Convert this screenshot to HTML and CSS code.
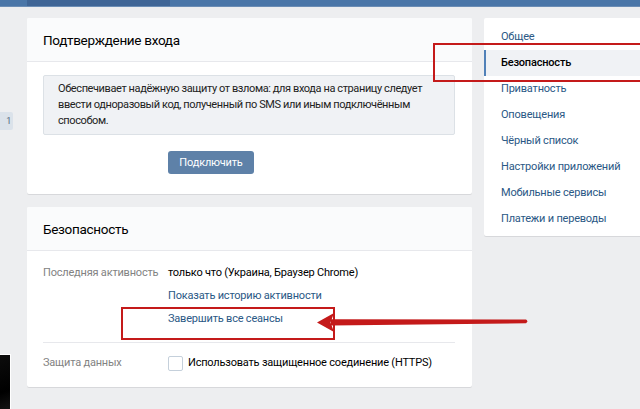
FILE: index.html
```html
<!DOCTYPE html>
<html lang="ru">

<head>
    <meta charset="UTF-8">
    <meta name="viewport" content="width=device-width, initial-scale=1.0">
    <title>Настройки — Безопасность</title>
    <link rel="stylesheet" href="styles.css">
</head>

<body>
    <header class="topbar">
        <div class="topbar-search"></div>
    </header>

    <div class="page">
        <!-- left strip (cut off) -->
        <aside class="side-strip">
            <span class="counter">1</span>
            <div class="thumb"></div>
        </aside>

        <main class="content">
            <!-- Login confirmation -->
            <section class="card">
                <h2 class="card-title">Подтверждение входа</h2>
                <div class="card-body">
                    <div class="info">
                        Обеспечивает надёжную защиту от взлома: для входа на страницу следует<br>
                        ввести одноразовый код, полученный по SMS или иным подключённым<br>
                        способом.
                    </div>
                    <button type="button" class="btn">Подключить</button>
                </div>
            </section>

            <!-- Security -->
            <section class="card">
                <h2 class="card-title">Безопасность</h2>
                <div class="card-body settings">
                    <div class="row row-activity">
                        <div class="row-label">Последняя активность</div>
                        <div class="row-value">
                            <div>только что (Украина, Браузер Chrome)</div>
                            <a href="#" class="link">Показать историю активности</a>
                            <a href="#" class="link">Завершить все сеансы</a>
                        </div>
                    </div>
                    <div class="row row-https">
                        <div class="row-label">Защита данных</div>
                        <label class="row-value check">
                            <span class="checkbox"></span>
                            Использовать защищенное соединение (HTTPS)
                        </label>
                    </div>
                </div>
            </section>
        </main>

        <nav class="menu">
            <a href="#" class="menu-item">Общее</a>
            <a href="#" class="menu-item active">Безопасность</a>
            <a href="#" class="menu-item">Приватность</a>
            <a href="#" class="menu-item">Оповещения</a>
            <a href="#" class="menu-item">Чёрный список</a>
            <a href="#" class="menu-item">Настройки приложений</a>
            <a href="#" class="menu-item">Мобильные сервисы</a>
            <a href="#" class="menu-item">Платежи и переводы</a>
        </nav>
    </div>

    <!-- red annotations -->
    <div class="mark mark-menu"></div>
    <div class="mark mark-sessions"></div>
    <svg class="arrow" width="640" height="409" viewBox="0 0 640 409">
        <path d="M331 319.2 L526 319.6 Q528.5 321.2 526 323.2 L331 325.6 Z" fill="#c41a1a" />
        <path d="M317 322.5 L334 313 L330.5 322.5 L334 332 Z" fill="#c41a1a" />
    </svg>
</body>

</html>
```

FILE: styles.css
```css
body {
    font-family: Roboto, 'Open Sans', sans-serif;
    font-size: 11px;
    letter-spacing: -0.2px;
    color: #000;
    margin: 0;
    padding: 0;
    background-color: #edeef0;
    overflow: hidden;
    width: 640px;
    height: 409px;
    position: relative;
}

.topbar {
    height: 6px;
    background-color: #4a76a8;
    border-bottom: 1px solid #6b8db5;
}

.topbar-search {
    margin-left: 27px;
    width: 143px;
    height: 6px;
    background-color: #3f6596;
}

.page {
    display: flex;
    align-items: flex-start;
    padding-top: 11px;
}

.side-strip {
    width: 27px;
    flex-shrink: 0;
    display: flex;
    flex-direction: column;
    align-items: flex-start;
    padding-top: 94px;
}

.counter {
    display: block;
    width: 13px;
    height: 18px;
    line-height: 18px;
    text-align: right;
    padding-right: 2px;
    box-sizing: border-box;
    font-size: 9px;
    color: #55677d;
    background-color: #dbe2ea;
    border-radius: 0 2px 2px 0;
}

.thumb {
    margin-top: 224px;
    width: 10px;
    height: 60px;
    background: linear-gradient(160deg, #0c0c0c, #000 60%, #1a1a1a);
    border-top: 1px solid #fff;
    border-right: 1px solid #fff;
}

.content {
    width: 445px;
    flex-shrink: 0;
    display: flex;
    flex-direction: column;
    gap: 13px;
}

.card {
    background: #fff;
    border-radius: 2px;
    box-shadow: 0 1px 0 0 #d7d8db;
}

.card-title {
    margin: 0;
    height: 43px;
    line-height: 45px;
    padding: 0 16px;
    font-size: 13.5px;
    letter-spacing: -0.3px;
    font-weight: normal;
    color: #000;
    background-color: #fafbfc;
    border-bottom: 1px solid #e7e8ec;
    border-radius: 2px 2px 0 0;
}

.card-body {
    padding: 13px 17px 20px 16px;
}

.info {
    padding: 5px 14px;
    line-height: 16px;
    font-size: 11px;
    letter-spacing: -0.4px;
    white-space: nowrap;
    background-color: #f0f2f5;
    border: 1px solid #dce1e6;
    border-radius: 2px;
    color: #222;
}

.btn {
    display: block;
    margin: 16px 0 0 125px;
    width: 86px;
    height: 23px;
    padding: 0;
    font-family: inherit;
    font-size: 11px;
    letter-spacing: -0.2px;
    color: #fff;
    background-color: #5e81a8;
    border: none;
    border-radius: 3px;
    cursor: pointer;
}

.settings {
    padding: 0 17px 13px 16px;
}

.row {
    display: grid;
    grid-template-columns: 125px 1fr;
}

.row-activity {
    padding: 10px 0 12px;
    border-bottom: 1px solid #e7e8ec;
    line-height: 23px;
}

.row-https {
    padding-top: 9px;
    line-height: 22px;
}

.row-label {
    color: #828282;
    white-space: nowrap;
}

.row-value {
    color: #000;
    white-space: nowrap;
}

.link {
    display: block;
    color: #2a5885;
    text-decoration: none;
}

.check {
    display: flex;
    align-items: center;
    gap: 5px;
    cursor: pointer;
}

.checkbox {
    width: 13px;
    height: 13px;
    border: 1px solid #c5d0db;
    border-radius: 2px;
    background: #fff;
}

.menu {
    width: 170px;
    flex-shrink: 0;
    margin-left: 12px;
    padding: 6px 0 4px;
    background: #fff;
    border-radius: 2px;
    box-shadow: 0 1px 0 0 #d7d8db;
}

.menu-item {
    display: block;
    height: 26px;
    line-height: 26px;
    padding-left: 17px;
    color: #2a5885;
    text-decoration: none;
}

.menu-item.active {
    padding-left: 15px;
    border-left: 2px solid #5181b8;
    background-color: #f0f2f5;
    color: #000;
    font-weight: 500;
}

.mark {
    position: absolute;
    border: 2px solid #c41a1a;
    pointer-events: none;
}

.mark-menu {
    left: 433px;
    top: 43px;
    width: 220px;
    height: 35px;
}

.mark-sessions {
    left: 121px;
    top: 307px;
    width: 210px;
    height: 29px;
}

.arrow {
    position: absolute;
    left: 0;
    top: 0;
    pointer-events: none;
}
```
